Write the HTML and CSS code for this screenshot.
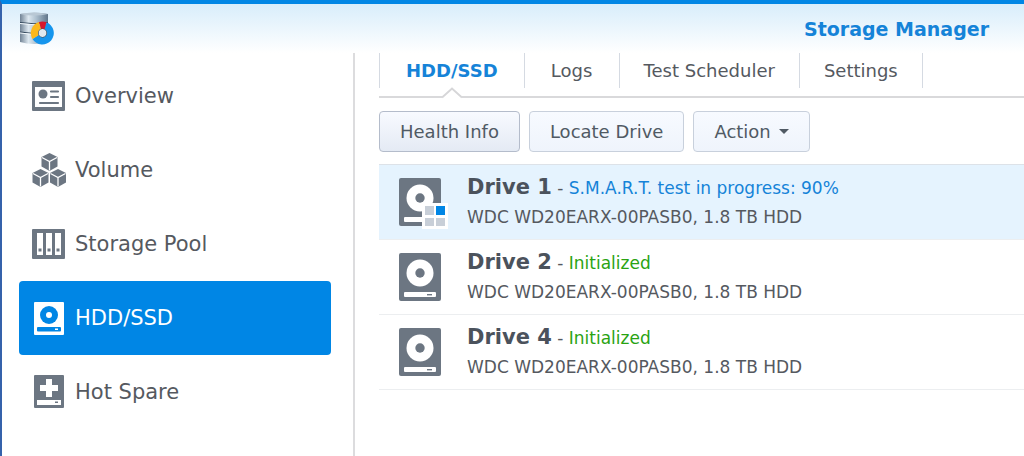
FILE: index.html
```html
<!DOCTYPE html>
<html lang="en">
<head>
<meta charset="utf-8">
<title>Storage Manager</title>
<link rel="stylesheet" href="styles.css">
</head>
<body>
<svg class="defs" width="0" height="0" aria-hidden="true">
  <symbol id="drive" viewBox="0 0 42 48">
    <rect width="42" height="48" rx="2" fill="#6c7682"/>
    <circle cx="21" cy="20" r="13.5" fill="#fff"/>
    <circle cx="21" cy="20" r="4.7" fill="#6c7682"/>
    <rect x="5" y="39" width="32" height="5" rx="1" fill="#fff"/>
    <rect x="28" y="41" width="5" height="1.4" fill="#6c7682"/>
  </symbol>
</svg>
<div class="window">
  <header class="titlebar">
    <svg class="logo" viewBox="0 0 36 34" aria-hidden="true">
      <defs>
        <linearGradient id="metal">
          <stop offset="0" stop-color="#718395"/><stop offset=".3" stop-color="#dde8f0"/>
          <stop offset=".6" stop-color="#a9bccb"/><stop offset="1" stop-color="#60758a"/>
        </linearGradient>
      </defs>
      <path fill="url(#metal)" d="M1 2Q15-1 29 2V30Q15 34 1 30Z"/>
      <path fill="#b9c8d4" d="M1 2Q15-1 29 2Q15 5 1 2Z"/>
      <path fill="none" stroke="#34495d" stroke-width="1" d="M1 10.500Q15 13 29 10.500M1 20Q15 23 29 20"/>
      <path fill="none" stroke="#f3f9fd" stroke-width="1" d="M1 11.500Q15 14 29 11.500M1 21Q15 24 29 21"/>
      <circle cx="23.500" cy="21" r="4.500" fill="#dfe8ef" stroke="#26394b"/>
      <path fill="#1595ed" d="M27.500 10.300A11.500 11.500 0 1 1 13.500 27L19.500 23.300A4.600 4.600 0 1 0 25.500 16.900Z"/>
      <path fill="#fbb81d" d="M13.500 27A11.500 11.500 0 0 1 20 10L22 16.700A4.600 4.600 0 0 0 19.500 23.300Z"/>
      <path fill="#d6182c" d="M20 10A11.500 11.500 0 0 1 27.500 10.300L25.500 16.900A4.600 4.600 0 0 0 22 16.700Z"/>
    </svg>
    <h1 class="title">Storage Manager</h1>
  </header>
  <div class="body">
    <nav class="sidebar">
      <a class="nav-item" href="#overview">
        <svg class="nav-icon" viewBox="0 0 34 34" aria-hidden="true"><path fill="#6c7682" fill-rule="evenodd" d="M2 2H32Q33 2 33 3V31Q33 32 32 32H1Q0 32 0 31V3Q0 2 1 2ZM3 8V28H30V8Z"/><circle cx="11" cy="15" r="4.500" fill="#6c7682"/><path stroke="#6c7682" stroke-width="2.200" stroke-linecap="round" d="M19 12.500H26M19 18H26M8 24H26"/></svg>
        <span>Overview</span>
      </a>
      <a class="nav-item" href="#volume">
        <svg class="nav-icon" viewBox="0 0 34 34" aria-hidden="true">
          <g id="cube"><path fill="#6c7682" d="M17.500 0L25.500 4V13.500L17.500 18L9.500 13.500V4Z"/><path fill="none" stroke="#fff" stroke-width="1.300" d="M10 4.500L17.500 8.500L25 4.500M17.500 8.500V17.500"/></g>
          <use href="#cube" x="-9" y="16"/><use href="#cube" x="8.500" y="16"/>
        </svg>
        <span>Volume</span>
      </a>
      <a class="nav-item" href="#pool">
        <svg class="nav-icon" viewBox="0 0 34 34" aria-hidden="true"><rect y="2" width="33" height="30" rx="1" fill="#6c7682"/><path fill="#fff" d="M5 6H11V28H5ZM14 6H20V28H14ZM23 6H29V28H23Z"/><path fill="#6c7682" d="M6.500 21.500h3v3h-3ZM15.500 21.500h3v3h-3ZM24.500 21.500h3v3h-3Z"/></svg>
        <span>Storage Pool</span>
      </a>
      <a class="nav-item active" href="#hdd" aria-current="page">
        <svg class="nav-icon" viewBox="0 0 34 34" aria-hidden="true"><rect x="2" y="1" width="30" height="33" rx="1" fill="#fff"/><circle cx="17" cy="14" r="9" fill="#0086e5"/><circle cx="17" cy="14" r="3" fill="#fff"/><rect x="5" y="26" width="24" height="4.500" rx="1" fill="#0086e5"/><rect x="23" y="27.500" width="3" height="1.500" fill="#fff"/></svg>
        <span>HDD/SSD</span>
      </a>
      <a class="nav-item" href="#spare">
        <svg class="nav-icon" viewBox="0 0 34 34" aria-hidden="true"><rect x="2" y="0" width="30" height="33" rx="1" fill="#6c7682"/><path fill="#fff" d="M14 4H20V10H26V16H20V22H14V16H8V10H14ZM5 25H29V30H5Z"/><rect x="23" y="26.500" width="3" height="1.500" fill="#6c7682"/></svg>
        <span>Hot Spare</span>
      </a>
    </nav>
    <main class="content">
      <nav class="tabs">
        <a class="tab selected" href="#drives" aria-current="page">HDD/SSD<svg class="notch" viewBox="0 0 20 12" aria-hidden="true"><path fill="#fff" d="M0 10L10 1L20 10V12H0Z"/><path fill="none" stroke="#d6d6d8" stroke-width="2" d="M0 10.500L10 1.500L20 10.500"/></svg></a>
        <a class="tab" href="#logs">Logs</a>
        <a class="tab" href="#scheduler">Test Scheduler</a>
        <a class="tab" href="#settings">Settings</a>
      </nav>
      <div class="toolbar">
        <button class="button focused" type="button">Health Info</button>
        <button class="button" type="button">Locate Drive</button>
        <button class="button" type="button" aria-haspopup="menu">Action<svg class="caret" viewBox="0 0 10 6" aria-hidden="true"><path fill="#505a64" d="M0 0H10L5 5Z"/></svg></button>
      </div>
      <ul class="drives">
        <li class="drive current">
          <div class="drive-figure">
            <svg class="drive-icon" viewBox="0 0 42 48" aria-hidden="true"><use href="#drive"/></svg>
            <svg class="badge" viewBox="0 0 26 26" aria-hidden="true"><rect width="26" height="26" fill="#fff"/><path fill="#c8cfd8" d="M3 3h9v9H3ZM3 15h9v8H3ZM14 15h9v8h-9Z"/><path fill="#0086e5" d="M14 3h9v9h-9Z"/></svg>
          </div>
          <div>
            <div class="drive-head"><strong class="drive-name">Drive 1</strong> - <span class="testing">S.M.A.R.T. test in progress: 90%</span></div>
            <div class="model">WDC WD20EARX-00PASB0, 1.8 TB HDD</div>
          </div>
        </li>
        <li class="drive">
          <div class="drive-figure"><svg class="drive-icon" viewBox="0 0 42 48" aria-hidden="true"><use href="#drive"/></svg></div>
          <div>
            <div class="drive-head"><strong class="drive-name">Drive 2</strong> - <span class="ready">Initialized</span></div>
            <div class="model">WDC WD20EARX-00PASB0, 1.8 TB HDD</div>
          </div>
        </li>
        <li class="drive">
          <div class="drive-figure"><svg class="drive-icon" viewBox="0 0 42 48" aria-hidden="true"><use href="#drive"/></svg></div>
          <div>
            <div class="drive-head"><strong class="drive-name">Drive 4</strong> - <span class="ready">Initialized</span></div>
            <div class="model">WDC WD20EARX-00PASB0, 1.8 TB HDD</div>
          </div>
        </li>
      </ul>
    </main>
  </div>
</div>
</body>
</html>
```
FILE: styles.css
```css
* { box-sizing: border-box; }
body {
  margin: 0;
  font-family: Verdana, "DejaVu Sans", sans-serif;
  color: #55595f;
  background: #fff;
}
a { color: inherit; text-decoration: none; }
.defs { position: absolute; }
.window {
  display: flex;
  flex-direction: column;
  min-height: 100vh;
  border-top: 4px solid #0086e5;
  border-left: 2px solid #3562ab;
}
.titlebar {
  display: flex;
  align-items: center;
  justify-content: space-between;
  height: 49px;
  padding: 0 35px 0 17px;
  background: linear-gradient(#d8edfb, #fff);
}
.logo { width: 36px; height: 34px; }
.title { margin: 0; font-size: 19px; line-height: 24px; color: #1583d8; }
.body { display: flex; flex: 1; }
.sidebar {
  flex: 0 0 353px;
  padding: 6px 22px 0 17px;
  border-right: 2px solid #dcdcde;
}
.nav-item {
  display: flex;
  align-items: center;
  gap: 9px;
  height: 74px;
  padding-left: 13px;
  border-radius: 4px;
  font-size: 21px;
}
.nav-icon { width: 34px; height: 34px; }
.active { color: #fff; background: #0086e5; }
.content { flex: 1; min-width: 0; padding-left: 24px; }
.tabs {
  display: flex;
  align-items: flex-start;
  height: 45px;
  border-bottom: 2px solid #d9d9db;
}
.tab {
  position: relative;
  min-width: 95px;
  height: 35px;
  padding: 0 24px;
  border-right: 1px solid #d5dae2;
  font-size: 18px;
  line-height: 36px;
  text-align: center;
  white-space: nowrap;
}
.selected {
  padding: 0 26px;
  border-left: 1px solid #d5dae2;
  font-weight: bold;
  color: #1583d8;
}
.notch {
  position: absolute;
  top: 34px;
  left: 50%;
  width: 20px;
  height: 12px;
  margin-left: -10px;
}
.toolbar { display: flex; gap: 9px; padding: 13px 0 12px; }
.button {
  display: flex;
  align-items: center;
  height: 41px;
  padding: 0 20px;
  border: 1px solid #c8d0dc;
  border-radius: 4px;
  font: 18px Verdana, "DejaVu Sans", sans-serif;
  color: #505a64;
  background: linear-gradient(#f7faff, #eff4fc);
  white-space: nowrap;
}
.focused { border-color: #b4bccb; background: linear-gradient(#f8faff, #e4eaf4); }
.caret { width: 10px; height: 6px; margin-left: 8px; }
.drives { margin: 0; padding: 0; list-style: none; border-top: 1px solid #dde2e8; }
.drive {
  display: flex;
  gap: 26px;
  height: 75px;
  padding: 8px 20px 0;
  border-bottom: 1px solid #eceef0;
}
.current { background: #e5f3fe; }
.drive-figure { position: relative; width: 42px; padding-top: 5px; }
.drive-icon { display: block; width: 42px; height: 48px; }
.badge { position: absolute; left: 23px; top: 30px; width: 26px; height: 26px; }
.drive-head { font-size: 17px; line-height: 28px; }
.drive-name { font-size: 21px; color: #4b525c; }
.testing { color: #1583d8; }
.ready { color: #2aa312; }
.model { font-size: 17px; line-height: 30px; }
```
